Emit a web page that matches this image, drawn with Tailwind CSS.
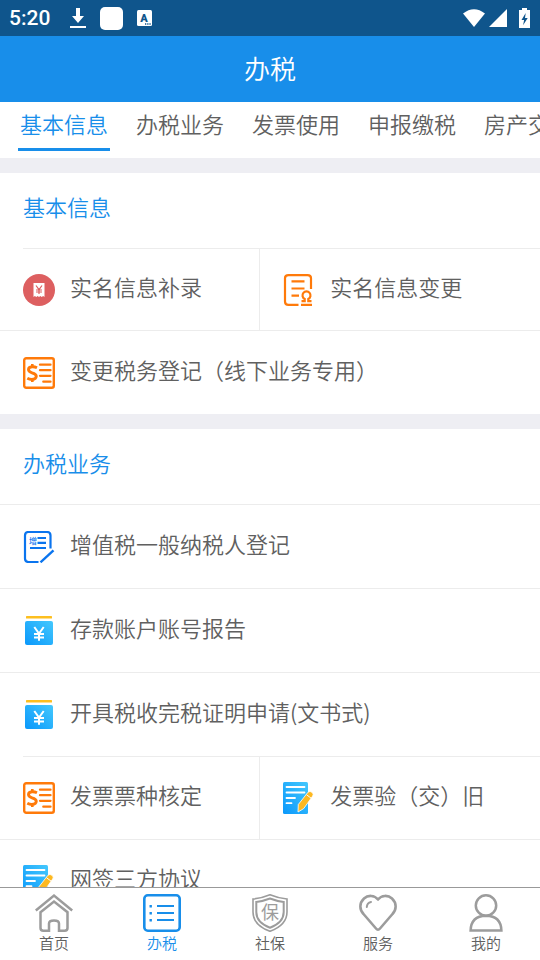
<!DOCTYPE html>
<html lang="zh-CN">
<head>
<meta charset="utf-8">
<meta name="viewport" content="width=device-width, initial-scale=1">
<title>办税</title>
<script src="https://cdn.jsdelivr.net/npm/@tailwindcss/browser@4"></script>
</head>
<body class="flex h-screen flex-col overflow-hidden bg-white font-['Noto_Sans_CJK_SC',sans-serif] font-[350] text-[#606060]">

<!-- Shared icon symbols -->
<svg class="absolute size-0" aria-hidden="true">
  <defs>
    <linearGradient id="blue" x1="0" y1="1" x2="1" y2="0">
      <stop offset="0" stop-color="#0a98fb"/><stop offset="1" stop-color="#44c8fd"/>
    </linearGradient>
    <symbol id="receipt" viewBox="0 0 32 32">
      <rect x="1.200" y="1.200" width="29.600" height="29.600" rx="2" fill="#fff" stroke="#ff7a0a" stroke-width="2.400"/>
      <path d="M14 10.800Q11.500 9.600 9 9.800 5.500 10.200 5.500 12.600 5.500 14.800 9 15.800 13.300 17 13.300 19.300 13.200 22.200 9 22.500 6.500 22.500 4.300 21.300" fill="none" stroke="#ff7a0a" stroke-width="2.900"/>
      <path d="M9.300 7v3M9.300 22v3" stroke="#ff7a0a" stroke-width="2.600"/>
      <path d="M17 7.700h10.500M17 13.200h10.500M17 18.800h10.500M20.300 24.700h7.200" stroke="#ff7a0a" stroke-width="2.300" stroke-linecap="round"/>
    </symbol>
    <symbol id="yuan" viewBox="0 0 32 32">
      <rect x="3" y="1" width="26" height="2.600" rx=".6" fill="#fdbf1f"/>
      <rect x="2" y="6" width="28" height="24" rx="2" fill="url(#blue)"/>
      <path d="M11.300 12l4.700 6.500 4.700-6.500M11 19h10M11 22.500h10M16 18.500v7.300" fill="none" stroke="#fff" stroke-width="2"/>
    </symbol>
    <symbol id="edit" viewBox="0 0 32 32">
      <rect x="0" y="0" width="25" height="32" rx="1.500" fill="url(#blue)"/>
      <path d="M3.500 5h18M3.500 10.500h18M3.500 16h8.500M3.500 21.200h5" stroke="#fff" stroke-width="1.800" stroke-linecap="round"/>
      <path d="M15.300 22.500L25 10.200q1.800-1.700 4.200.2 1.800 1.700.5 3.600L20.700 26.600l-5.700 3.400z" fill="#fdb820" stroke="#fff" stroke-width=".8"/>
      <path d="M23.500 12.700l4.500 3.400" stroke="#fff" stroke-width="1"/>
    </symbol>
  </defs>
</svg>

<!-- Status bar -->
<div class="flex h-9 shrink-0 items-center bg-[#0f558c] pr-[10px] pl-[9px] text-white">
  <span class="font-[Roboto,sans-serif] text-[21px] leading-9 font-medium">5:20</span>
  <svg class="ml-5 h-5 w-4" viewBox="0 0 16 20" fill="#fff" aria-hidden="true"><path d="M6 0h4v8h4l-6 7-6-7h4zM0 18h16v2H0z"/></svg>
  <span class="ml-[14px] size-[23px] rounded-[5px] bg-white"></span>
  <svg class="ml-[14px] h-4 w-[15px]" viewBox="0 0 15 16" aria-hidden="true"><rect width="15" height="16" rx="1.500" fill="#fff"/><text x="7" y="12" text-anchor="middle" font-family="Roboto, sans-serif" font-size="11" font-weight="900" fill="#0f558c">A</text><path d="M8 14h1.300M10.200 14h1.300M12.400 14h1.300" stroke="#0f558c" stroke-width="1.300"/></svg>
  <svg class="ml-auto h-[18px] w-[22px]" viewBox="0 0 22 18" fill="#fff" aria-hidden="true"><path d="M0 4.500Q11-4 22 4.500L11 18z"/></svg>
  <svg class="ml-1 size-[18px]" viewBox="0 0 18 18" fill="#fff" aria-hidden="true"><path d="M18 0v18H0z"/></svg>
  <svg class="ml-3 h-5 w-[11px]" viewBox="0 0 11 20" aria-hidden="true"><path d="M3 0h5v2h3v18H0V2h3z" fill="#fff"/><path d="M6.700 5L2.500 12h2.600l-1 5.200L8.700 10H6z" fill="#0f558c"/></svg>
</div>

<header class="flex h-[66px] shrink-0 items-start justify-center bg-[#188eea] text-white">
  <h1 class="text-[26px] leading-[64px] font-[350]">办税</h1>
</header>

<div role="tablist" class="flex h-14 shrink-0 items-start gap-6 overflow-hidden pl-[18px] text-[22px] leading-[42px] whitespace-nowrap">
  <button role="tab" aria-selected="true" class="shrink-0 border-b-[3px] border-[#188eea] px-[2px] pb-1 text-[#188eea]">基本信息</button>
  <button role="tab" aria-selected="false" class="shrink-0 px-[2px]">办税业务</button>
  <button role="tab" aria-selected="false" class="shrink-0 px-[2px]">发票使用</button>
  <button role="tab" aria-selected="false" class="shrink-0 px-[2px]">申报缴税</button>
  <button role="tab" aria-selected="false" class="shrink-0 px-[2px]">房产交易</button>
</div>

<main class="min-h-0 flex-1 overflow-hidden text-[22px] leading-8 whitespace-nowrap">
  <section class="border-t-[15px] border-[#eeeef3]">
    <h2 class="h-[75px] px-[23px] text-[22px] leading-[66px] font-[350] text-[#188eea]">基本信息</h2>
    <div class="grid grid-cols-[48%_1fr]">
      <div class="pl-[23px]">
        <a href="#" class="flex h-[82px] items-center gap-[15px] border-t border-[#ececec]">
          <svg class="size-8 shrink-0" viewBox="0 0 32 32" aria-hidden="true"><circle cx="16" cy="16" r="16" fill="#dd5f60"/><path d="M10.500 9h11v14l-1.400-1-1.400 1-1.350-1-1.350 1-1.350-1-1.350 1-1.400-1-1.400 1z" fill="#fff"/><path d="M13 11.500l3 4.200 3-4.200M13 16h6M13 18h6M16 15.500v4.500" fill="none" stroke="#dd5f60" stroke-width="1.200"/></svg>
          <span class="pb-2">实名信息补录</span>
        </a>
      </div>
      <a href="#" class="flex h-[82px] items-center gap-[15px] border-t border-l border-[#ececec] pl-[23px]">
        <svg class="size-8 shrink-0" viewBox="0 0 32 32" fill="none" stroke="#ff7a0a" stroke-width="2.200" aria-hidden="true"><path d="M15.500 30.900H5.500Q2 30.900 2 27.500V4.200Q2 1.100 5.500 1.100H24.500Q28 1.100 28 4.200V15"/><path d="M8.500 7.300h13M8.500 14.500h13M8.500 21.700h7.500"/><path d="M18.500 27.200h3.200v-2.200a4 4 0 1 1 3.600 0v2.200h3.200M18 30.900h11"/></svg>
        <span class="pb-2">实名信息变更</span>
      </a>
    </div>
    <a href="#" class="flex h-[84px] items-center gap-[15px] border-t border-[#ececec] px-[23px]">
      <svg class="size-8 shrink-0" aria-hidden="true"><use href="#receipt"/></svg>
      <span class="pb-2">变更税务登记（线下业务专用）</span>
    </a>
  </section>

  <section class="border-t-[15px] border-[#eeeef3]">
    <h2 class="h-[75px] px-[23px] text-[22px] leading-[66px] font-[350] text-[#188eea]">办税业务</h2>
    <a href="#" class="flex h-[84px] items-center gap-[15px] border-t border-[#ececec] px-[23px]">
      <svg class="size-8 shrink-0" viewBox="0 0 32 32" fill="none" stroke="#0a74ee" stroke-width="2.200" aria-hidden="true"><path d="M15.500 31H5.500Q2 31 2 27.500V4.500Q2 1 5.500 1H24Q27.500 1 27.500 4.500V17.500"/><path d="M17.500 31.300l13-12" stroke-width="2.400"/><path d="M14.500 7h8.500M14.500 11.800h8.500M7 17h16"/><text x="10" y="13" text-anchor="middle" font-family="Noto Sans CJK SC, sans-serif" font-size="8" font-weight="500" fill="#0a74ee" stroke="none">增</text></svg>
      <span class="pb-2">增值税一般纳税人登记</span>
    </a>
    <a href="#" class="flex h-[84px] items-center gap-[15px] border-t border-[#ececec] px-[23px]">
      <svg class="size-8 shrink-0" aria-hidden="true"><use href="#yuan"/></svg>
      <span class="pb-2">存款账户账号报告</span>
    </a>
    <a href="#" class="flex h-[84px] items-center gap-[15px] border-t border-[#ececec] px-[23px]">
      <svg class="size-8 shrink-0" aria-hidden="true"><use href="#yuan"/></svg>
      <span class="pb-2">开具税收完税证明申请(文书式)</span>
    </a>
    <div class="grid grid-cols-[48%_1fr]">
      <div class="pl-[23px]">
        <a href="#" class="flex h-[83px] items-center gap-[15px] border-t border-[#ececec]">
          <svg class="size-8 shrink-0" aria-hidden="true"><use href="#receipt"/></svg>
          <span class="pb-2">发票票种核定</span>
        </a>
      </div>
      <a href="#" class="flex h-[83px] items-center gap-[15px] border-t border-l border-[#ececec] pl-[23px]">
        <svg class="size-8 shrink-0" aria-hidden="true"><use href="#edit"/></svg>
        <span class="pb-2">发票验（交）旧</span>
      </a>
    </div>
    <a href="#" class="flex h-[82px] items-center gap-[15px] border-t border-[#ececec] px-[23px]">
      <svg class="size-8 shrink-0" aria-hidden="true"><use href="#edit"/></svg>
      <span class="pb-2">网签三方协议</span>
    </a>
  </section>
</main>

<nav class="grid h-[73px] shrink-0 grid-cols-5 border-t border-[#999] bg-white text-[15px] leading-[22px]">
  <a href="#" class="flex flex-col items-center pt-[6px]">
    <svg class="size-[38px]" viewBox="0 0 38 38" fill="none" stroke="#9c9c9c" stroke-width="2.500" aria-hidden="true"><path d="M.8 16.500L19 1.600l18.200 14.900"/><path d="M5.500 18.200L19 7.500l13.500 10.700V34q0 2.700-2.800 2.700H24V29.500q0-3-5-3t-5 3v7.200H8.300q-2.800 0-2.800-2.700z"/></svg>
    <span>首页</span>
  </a>
  <a href="#" aria-current="page" class="flex flex-col items-center pt-[6px] text-[#188eea]">
    <svg class="size-[38px]" viewBox="0 0 38 38" fill="none" stroke="#188eea" aria-hidden="true"><rect x="1.300" y="1.300" width="35.400" height="35.400" rx="3.500" stroke-width="2.600"/><path d="M14 12h17M14 19h17M14 26h17" stroke-width="1.800"/><path d="M6.500 12.200h2.400M6.500 19.200h2.400M6.500 26.200h2.400" stroke-width="2.400"/></svg>
    <span>办税</span>
  </a>
  <a href="#" class="flex flex-col items-center pt-[6px]">
    <svg class="size-[38px]" viewBox="0 0 38 38" fill="none" stroke="#9c9c9c" aria-hidden="true"><path d="M19 .8Q10 4.500 2 5V18Q2 31 19 37.300 36 31 36 18V5Q28 4.500 19 .8z" stroke-width="1.600"/><path d="M19 4.500Q12 7.200 5.300 8V18Q5.300 28.500 19 33.700 32.700 28.500 32.700 18V8Q26 7.200 19 4.500z" stroke-width="2"/><text x="19" y="24.500" text-anchor="middle" font-family="Noto Sans CJK SC, sans-serif" font-size="18" font-weight="400" fill="#9c9c9c" stroke="none">保</text></svg>
    <span>社保</span>
  </a>
  <a href="#" class="flex flex-col items-center pt-[6px]">
    <svg class="size-[38px]" viewBox="0 0 38 38" fill="none" stroke="#9c9c9c" stroke-width="2.600" stroke-linejoin="round" stroke-linecap="round" aria-hidden="true"><path d="M19 5.500C15.500 1 9 .8 5 4.500 .2 9 .3 15.500 4.500 20L17 34.500q2 2.500 4 0L33.500 20C37.700 15.500 37.800 9 33 4.500 29 .8 22.500 1 19 5.500z"/><path d="M7.800 13q.3-4.300 4.200-5" stroke-width="2"/></svg>
    <span>服务</span>
  </a>
  <a href="#" class="flex flex-col items-center pt-[6px]">
    <svg class="size-[38px]" viewBox="0 0 38 38" fill="none" stroke="#9c9c9c" stroke-width="2.500" aria-hidden="true"><circle cx="19" cy="11.500" r="10.200"/><path d="M3.600 36.600Q4 22 19 21.800 34 22 34.400 36.600z"/></svg>
    <span>我的</span>
  </a>
</nav>
</body>
</html>
